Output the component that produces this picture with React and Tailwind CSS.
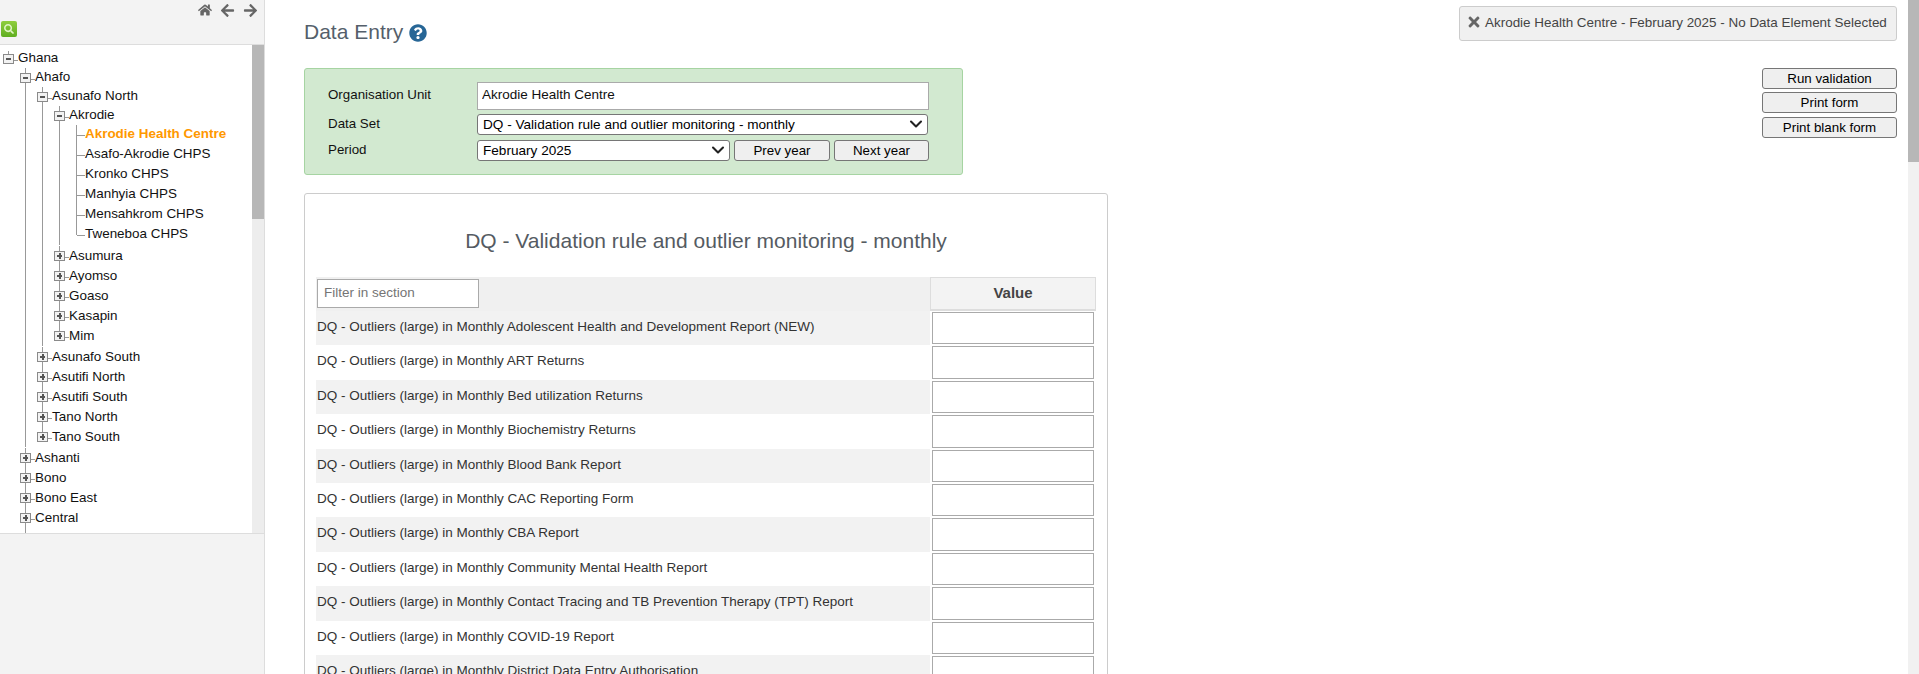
import React from "react";
import { ChevronDown } from "lucide-react";
import { FaHome, FaArrowLeft, FaArrowRight, FaQuestionCircle, FaTimes, FaSearch } from "react-icons/fa";

const leaves = ["Asafo-Akrodie CHPS", "Kronko CHPS", "Manhyia CHPS", "Mensahkrom CHPS", "Tweneboa CHPS"];

const tree = {
  name: "Ghana",
  children: [
    {
      name: "Ahafo",
      children: [
        {
          name: "Asunafo North",
          children: [
            {
              name: "Akrodie",
              children: [{ name: "Akrodie Health Centre", leaf: true, selected: true }, ...leaves.map((name) => ({ name, leaf: true }))],
            },
            { name: "Asumura" },
            { name: "Ayomso" },
            { name: "Goaso" },
            { name: "Kasapin" },
            { name: "Mim" },
          ],
        },
        { name: "Asunafo South" },
        { name: "Asutifi North" },
        { name: "Asutifi South" },
        { name: "Tano North" },
        { name: "Tano South" },
      ],
    },
    { name: "Ashanti" },
    { name: "Bono" },
    { name: "Bono East" },
    { name: "Central" },
    { name: "Eastern" },
  ],
};

const rows = [
  "Adolescent Health and Development Report (NEW)",
  "ART Returns",
  "Bed utilization Returns",
  "Biochemistry Returns",
  "Blood Bank Report",
  "CAC Reporting Form",
  "CBA Report",
  "Community Mental Health Report",
  "Contact Tracing and TB Prevention Therapy (TPT) Report",
  "COVID-19 Report",
  "District Data Entry Authorisation",
];

function ToggleBox({ open }) {
  return (
    <span className="relative w-[11px] h-[10px] shrink-0 border border-[#8a8a8a] bg-[#f2f2f2] flex items-center justify-center">
      <span className="absolute left-1/2 -top-[4px] -ml-px w-px h-[3px] bg-[#999]" />
      <span className="block w-[5px] h-[2px] bg-[#555]" />
      {!open && <span className="absolute w-[2px] h-[6px] bg-[#555]" />}
    </span>
  );
}

function Node({ node, last, root }) {
  const open = !!node.children;
  return (
    <li className={`relative ${root ? "" : last ? "border-l border-transparent" : "border-l border-[#999]"}`}>
      {!root && last && <span className="absolute -left-px top-0 h-[10px] w-px bg-[#999]" />}
      {node.leaf ? (
        <div className="flex items-center h-5">
          <span className="w-2 h-px bg-[#999] shrink-0" />
          <span className={`-mt-[2px] text-[13.45px] ${node.selected ? "font-bold text-[#ff9800]" : "text-[#111]"}`}>{node.name}</span>
        </div>
      ) : (
        <div className={`flex items-center ${open ? "h-[19px]" : "h-5"} ${root ? "ml-[3px]" : "-ml-[6px]"}`}>
          <ToggleBox open={open} />
          <span className="w-1 h-px mt-[3px] bg-[#999] shrink-0" />
          <span className="text-[#111] text-[13.45px]">{node.name}</span>
        </div>
      )}
      {open && (
        <ul className={`${root ? "ml-[25px]" : "ml-4"} mb-px`}>
          {node.children.map((child, i) => (
            <Node key={child.name} node={child} last={i === node.children.length - 1} />
          ))}
        </ul>
      )}
    </li>
  );
}

function Sidebar() {
  return (
    <aside className="w-[265px] shrink-0 h-full bg-[#f3f3f3] border-r border-[#ddd] flex flex-col">
      <div className="h-[45px] shrink-0 border-b border-[#ddd] flex flex-col">
        <div className="flex justify-end items-center gap-2 pr-[6px] pt-[2px] text-[#666] h-[18px]">
          <FaHome className="text-[14px]" />
          <FaArrowLeft className="text-[15px]" />
          <FaArrowRight className="text-[15px]" />
        </div>
        <div className="ml-px mt-[3px] w-4 h-4 rounded-[2px] bg-linear-to-b from-[#8fce3d] to-[#5fae1f] flex items-center justify-center">
          <FaSearch className="text-[#dff5c4] text-[10px]" />
        </div>
      </div>
      <div className="h-[488px] flex bg-white overflow-hidden">
        <div className="flex-1 overflow-hidden pt-[4px]">
          <ul>
            <Node node={tree} root />
          </ul>
        </div>
        <div className="w-3 bg-[#ededed] shrink-0">
          <div className="h-[174px] bg-[#b7b7b7]" />
        </div>
      </div>
      <div className="flex-1 border-t border-[#ddd]" />
    </aside>
  );
}

const nativeBtn = "bg-[#efefef] border border-[#767676] rounded-[3px] text-[13.33px] text-black text-center";

function NativeSelect({ value, className }) {
  return (
    <div className={`relative ${className}`}>
      <select className="appearance-none block w-full h-full bg-white border border-[#767676] rounded-[3px] pl-[5px] pb-px text-[13.6px] text-black">
        <option>{value}</option>
      </select>
      <ChevronDown size={20} strokeWidth={2.5} className="absolute right-[2px] top-0 text-[#222] pointer-events-none" />
    </div>
  );
}

function SelectionForm() {
  return (
    <div className="mt-[23px] w-[659px] h-[107px] bg-[#d2e9d0] border border-[#a6d4a2] rounded-[3px] pl-[23px] pt-[13px] text-[13.33px] text-[#111]">
      <div className="flex items-center h-[28px]">
        <label className="w-[149px] pb-[3px]">Organisation Unit</label>
        <input
          readOnly
          value="Akrodie Health Centre"
          className="w-[452px] h-[28px] bg-white border border-[#aaa] pl-[4px] pb-[3px] text-[13.5px] text-[#111] outline-none"
        />
      </div>
      <div className="flex items-center h-[21px] mt-[4px]">
        <label className="w-[149px] pb-px">Data Set</label>
        <NativeSelect value="DQ - Validation rule and outlier monitoring - monthly" className="w-[451px] h-[21px]" />
      </div>
      <div className="flex items-center h-[21px] mt-[5px]">
        <label className="w-[149px] pb-px">Period</label>
        <NativeSelect value="February 2025" className="w-[253px] h-[21px]" />
        <button className={`${nativeBtn} w-[96px] h-[21px] ml-1`}>Prev year</button>
        <button className={`${nativeBtn} w-[95px] h-[21px] ml-1`}>Next year</button>
      </div>
    </div>
  );
}

function DataTable() {
  return (
    <div className="mt-[18px] w-[804px] h-[600px] border border-[#ccc] rounded-[3px] px-[11px] text-[13.5px] text-[#333]">
      <h2 className="h-[83px] pt-[33px] text-center text-[21px] leading-[28px] text-[#555b62]">
        DQ - Validation rule and outlier monitoring - monthly
      </h2>
      <div className="flex h-[34px]">
        <div className="flex-1 bg-[#f0f0f0] pl-px pt-[2px]">
          <input
            placeholder="Filter in section"
            className="w-[162px] h-[29px] bg-white border border-[#aaa] pl-[6px] pb-[2px] outline-none placeholder:text-[#757575]"
          />
        </div>
        <div className="w-[166px] bg-[#f3f3f3] border border-[#ddd] border-b-2 flex items-center justify-center font-bold text-[15px] text-[#444]">
          Value
        </div>
      </div>
      {rows.map((row, i) => (
        <div key={row} className={`flex h-[34.4px] ${i % 2 === 0 ? "bg-[#f2f2f2]" : "bg-white"}`}>
          <div className="flex-1 pl-px pb-[2px] flex items-center">DQ - Outliers (large) in Monthly {row}</div>
          <div className="w-[166px] bg-white pl-[2px] pt-px">
            <input className="block w-[162px] h-[32.4px] bg-white border border-[#aaa] outline-none" />
          </div>
        </div>
      ))}
    </div>
  );
}

export default function App() {
  return (
    <div className="h-[674px] w-full flex overflow-hidden bg-white font-['Liberation_Sans',Arial,sans-serif]">
      <Sidebar />
      <main className="flex-1 flex justify-between pl-[39px] pr-[11px] overflow-hidden">
        <div>
          <h1 className="mt-[19px] h-[26px] flex items-center gap-[6px] text-[21px] text-[#555f6b]">
            Data Entry
            <FaQuestionCircle className="mt-[2px] text-[18px] text-[#276696]" />
          </h1>
          <SelectionForm />
          <DataTable />
        </div>
        <div className="flex flex-col items-end pt-[6px]">
          <div className="h-[35px] w-[438px] bg-[#f0f0f0] border border-[#ccc] rounded-[3px] flex items-center pl-[6px] gap-[3px] text-[13.45px] text-[#444]">
            <FaTimes className="-mt-[3px] text-[16px] text-[#666]" />
            Akrodie Health Centre - February 2025 - No Data Element Selected
          </div>
          <button className={`${nativeBtn} w-[135px] h-[21px] mt-[27px]`}>Run validation</button>
          <button className={`${nativeBtn} w-[135px] h-[21px] mt-[3px]`}>Print form</button>
          <button className={`${nativeBtn} w-[135px] h-[21px] mt-[4px]`}>Print blank form</button>
        </div>
      </main>
      <div className="w-[11px] shrink-0 bg-[#f1f1f1]">
        <div className="h-[162px] bg-[#b7b7b7]" />
      </div>
    </div>
  );
}
